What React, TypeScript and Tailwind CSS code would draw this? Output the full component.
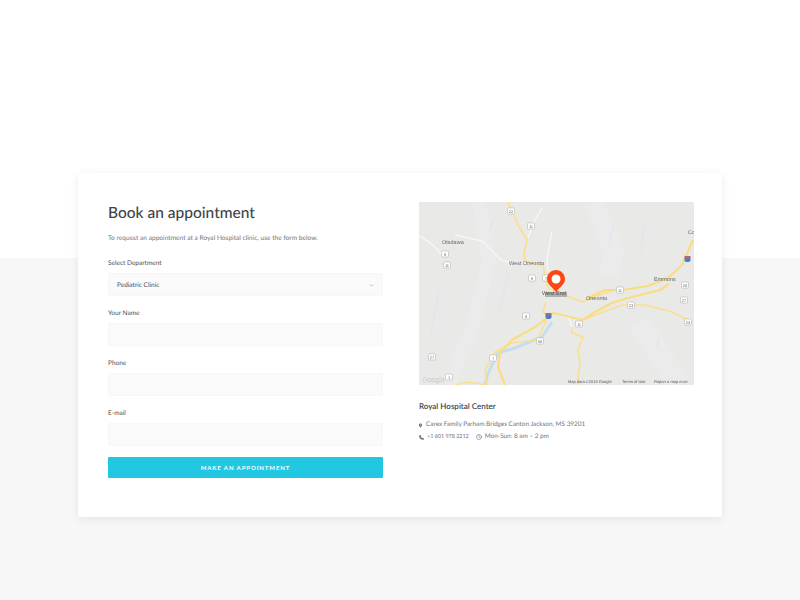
import React from 'react';
import { ChevronDown, Phone, Clock } from 'lucide-react';

const roads = [
  'M89 0 L93 9 L99 23 L108 38 L105 51 L106 59 L124 64 L128 83 L133 93',
  'M133 88 L146 93 L163 100 L186 91 L196 88',
  'M273 120 L253 110 L226 103 L203 103 L176 113 L164 118',
  'M129 115 L118 138 L93 141 L76 150 L66 168 L68 183',
  'M153 125 L153 131 L164 135 L159 148 L161 161 L158 183',
  'M127 100 L124 110 L129 115',
  'M36 183 Q50 178 66 183',
];

const mainRoads = [
  'M274 38 L263 63 L249 76 L229 84 L203 88 L186 88 L169 96',
  'M250 82 L241 88 L209 96 L193 101 L176 110 L164 118 L134 111 L129 115 L116 125 L93 138 L81 151 L79 165 L86 183',
];

const whiteRoads = [
  'M123 6 L115 20 L109 36',
  'M133 29 L130 45 L128 59 L129 69',
  'M1 34 L15 44 L24 54',
  'M36 33 L63 39 L83 59 L123 63',
  'M134 111 L150 116 L153 125',
];

const rivers = ['M133 120 L123 135 L96 146 L79 151 L69 171 L66 183'];

const shields: [number, number, string][] = [
  [92, 9, '22'], [112, 24, '11'], [26, 52, '8'], [28, 63, '11'], [113, 76, '8'], [127, 76, '7'],
  [201, 88, '11'], [266, 83, '28'], [265, 98, '27'], [212, 103, '23'], [160, 122, '11'],
  [107, 114, '8'], [121, 139, '38'], [74, 156, '7'], [13, 155, '27'], [269, 120, '23'], [30, 175, '1'],
];

function MapPicture() {
  return (
    <div className="relative w-[275px] h-[183px] overflow-hidden">
      <svg viewBox="0 0 275 183" className="block w-[275px] h-[183px] bg-[#e9e9e8] blur-[0.35px]">
        <path d="M60 0 L70 60 L55 120 L30 183" stroke="#eeeeed" strokeWidth="14" fill="none" opacity="0.5" />
        <path d="M175 0 L195 50 L190 75" stroke="#eeeeed" strokeWidth="20" fill="none" opacity="0.5" />
        <path d="M220 120 L260 183" stroke="#eeeeed" strokeWidth="22" fill="none" opacity="0.5" />
        <path d="M20 90 L12 130 M78 10 L70 30 M225 20 L222 50 M90 70 L80 110 M195 20 L190 45 M240 135 L238 145" stroke="#dbe7ee" strokeWidth="1.2" fill="none" />
        {rivers.map((d) => (
          <path key={d} d={d} stroke="#c4deec" strokeWidth="3" fill="none" />
        ))}
        {whiteRoads.map((d) => (
          <path key={d} d={d} stroke="#f7f7f6" strokeWidth="1.3" fill="none" />
        ))}
        {roads.map((d) => (
          <path key={d} d={d} stroke="#fbdf8c" strokeWidth="1.6" fill="none" strokeLinejoin="round" />
        ))}
        {mainRoads.map((d) => (
          <path key={d} d={d} stroke="#fbdc80" strokeWidth="2.2" fill="none" strokeLinejoin="round" />
        ))}
        <rect x="126" y="90" width="22" height="5" fill="#a3a3a1" opacity="0.8" />
        {shields.map(([x, y, t]) => (
          <g key={`${x}-${y}`}>
            <rect x={x - 3.5} y={y - 3} width="7" height="6" rx="1" fill="#fff" stroke="#a8a8a8" strokeWidth="0.5" />
            <text x={x} y={y + 1.5} fontSize="4" textAnchor="middle" fill="#666" fontFamily="Liberation Sans, sans-serif">{t}</text>
          </g>
        ))}
        {/* interstate shields */}
        <rect x="126.5" y="111" width="6" height="6" rx="2" fill="#4a80c8" />
        <rect x="126.5" y="111" width="6" height="1.5" fill="#d9605a" />
        <rect x="265.5" y="54" width="6" height="6" rx="2" fill="#4a80c8" />
        <rect x="265.5" y="54" width="6" height="1.5" fill="#d9605a" />
        <g fill="#63676a" fontFamily="Liberation Sans, sans-serif" fontSize="5.5">
          <text x="23" y="42">Otsdawa</text>
          <text x="90" y="63">West Oneonta</text>
          <text x="123" y="93" fill="#4a4d50">West End</text>
          <text x="167" y="98">Oneonta</text>
          <text x="235" y="79">Emmons</text>
          <text x="269" y="32">Co</text>
        </g>
        <text x="3" y="180" fontSize="7" fill="#fff" stroke="#bbb" strokeWidth="0.3" fontFamily="Liberation Sans, sans-serif">Google</text>
        <g fill="#55585a" fontFamily="Liberation Sans, sans-serif" fontSize="4">
          <text x="149" y="181">Map data ©2018 Google</text>
          <text x="203" y="181">Terms of Use</text>
          <text x="235" y="181">Report a map error</text>
        </g>
      </svg>
      {/* marker sits above the map */}
      <svg viewBox="0 0 18 22" className="absolute left-[128px] top-[68px] w-[18px] h-[22px]">
        <path d="M9 0 C4 0 0 4 0 9 C0 14 5 17 9 22 C13 17 18 14 18 9 C18 4 14 0 9 0 Z" fill="#ff4612" />
        <circle cx="9" cy="9" r="4.5" fill="#fff" />
      </svg>
    </div>
  );
}

function Field({ label, children }: { label: string; children?: React.ReactNode }) {
  return (
    <div>
      <label className="block h-[12px] mb-[3px] -mt-px pb-px text-[6.5px] leading-[11px] text-[#4d5156]">{label}</label>
      <div className="flex items-center justify-between h-[23px] px-[8px] pt-[2px] bg-[#fafafa] border border-[#f7f7f7] rounded-[2px]">
        {children}
      </div>
    </div>
  );
}

export default function App() {
  return (
    <div className="h-[600px] overflow-hidden pt-[173px] pl-[78px] bg-[linear-gradient(to_bottom,#ffffff_258px,#f7f7f7_258px)] font-['Lato',sans-serif] [text-rendering:geometricPrecision]">
      <div className="flex w-[644px] h-[344px] pt-[29px] pl-[30px] bg-white rounded-[2px] shadow-[0_2px_10px_rgba(0,0,0,0.08)]">
        <div className="w-[275px]">
          <h1 className="pt-px text-[15.5px] leading-[20px] font-medium text-[#3f444b]">Book an appointment</h1>
          <p className="mt-[9px] text-[6.6px] leading-[12px] text-[#70757b]">
            To request an appointment at a Royal Hospital clinic, use the form below.
          </p>
          <div className="mt-[15px] flex flex-col gap-[13px]">
            <Field label="Select Department">
              <span className="text-[6.5px] text-[#4d5156]">Pediatric Clinic</span>
              <ChevronDown size={5} className="text-[#777]" />
            </Field>
            <Field label="Your Name" />
            <Field label="Phone" />
            <Field label="E-mail" />
          </div>
          <button className="block w-full h-[21px] mt-[11px] bg-[#22c7e2] rounded-[1px] text-[6px] font-bold tracking-[0.9px] text-white">
            MAKE AN APPOINTMENT
          </button>
        </div>
        <div className="ml-[36px] w-[275px]">
          <MapPicture />
          <h2 className="mt-[15px] text-[8px] leading-[12px] font-semibold text-[#3f444b]">Royal Hospital Center</h2>
          <div className="mt-[7px] flex items-center gap-[4px] text-[6.4px] leading-[12px] text-[#70757b]">
            <svg viewBox="0 0 6 8" className="w-[3px] h-[5px] fill-[#5c6166]">
              <path d="M3 0 C1.3 0 0 1.3 0 3 C0 5 3 8 3 8 C3 8 6 5 6 3 C6 1.3 4.7 0 3 0 Z M3 4.2 A1.2 1.2 0 1 1 3 1.8 A1.2 1.2 0 0 1 3 4.2 Z" fillRule="evenodd" />
            </svg>
            <span>Carex Family Parham Bridges Canton Jackson, MS 39201</span>
          </div>
          <div className="flex items-center text-[6.4px] leading-[12px] text-[#70757b]">
            <Phone size={5} className="text-[#5c6166] fill-[#5c6166]" />
            <span className="ml-[3px] text-[5.6px] tracking-[-0.1px]">+1 601 978 2212</span>
            <Clock size={6} className="ml-[7px] text-[#5c6166]" />
            <span className="ml-[3px]">Mon-Sun: 8 am – 2 pm</span>
          </div>
        </div>
      </div>
    </div>
  );
}
